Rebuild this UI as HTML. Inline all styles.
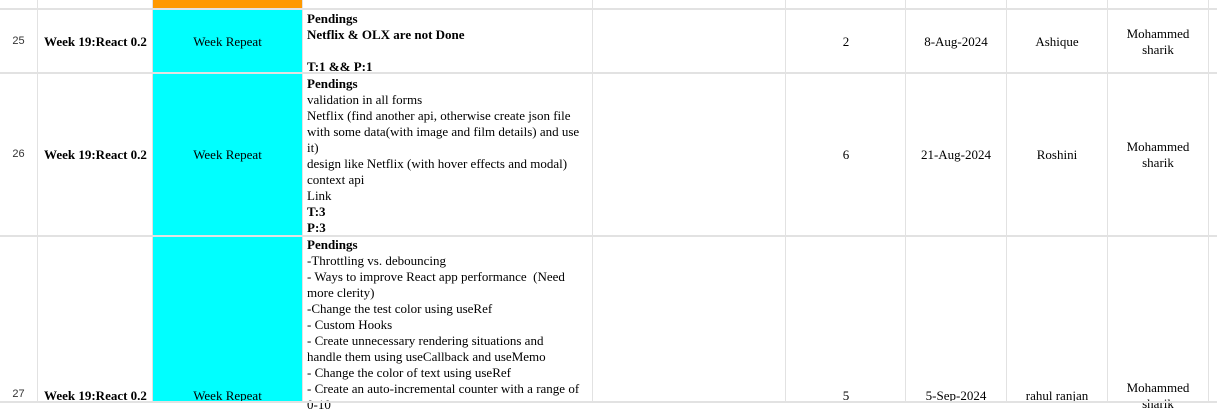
<!DOCTYPE html>
<html><head><style>
body{margin:0;width:1217px;height:403px;overflow:hidden;background:#fff;font-family:"Liberation Serif",serif;font-size:13px;color:#000;position:relative}
.h{position:absolute;left:0;width:1217px;height:2px;background:#e2e2e2}
.v{position:absolute;top:0;height:403px;width:1px;background:#e2e2e2}
.c{position:absolute;text-align:center;line-height:16px;font-family:"Liberation Serif",serif}
.n{position:absolute;font-family:"Liberation Sans",sans-serif;font-size:11px;color:#333;width:37px;text-align:center}
.t{position:absolute;left:307px;width:276px;line-height:16px}
b{font-weight:bold}
</style></head><body>
<div style="position:absolute;left:153px;top:0;width:149px;height:9px;background:#ff9900"></div>
<div style="position:absolute;left:153px;top:10px;width:149px;height:393px;background:#00ffff"></div>
<div class="v" style="left:37px"></div>
<div class="v" style="left:152px"></div>
<div class="v" style="left:302px"></div>
<div class="v" style="left:592px"></div>
<div class="v" style="left:785px"></div>
<div class="v" style="left:905px"></div>
<div class="v" style="left:1006px"></div>
<div class="v" style="left:1107px"></div>
<div class="v" style="left:1208px"></div>
<div class="h" style="top:8px"></div>
<div class="h" style="top:72px"></div>
<div class="h" style="top:235px"></div>
<div style="position:absolute;left:307px;top:-8px;line-height:16px">"</div>

<div class="n" style="top:35px">25</div>
<div class="c" style="left:38px;width:115px;top:34px;font-weight:bold">Week 19:React 0.2</div>
<div class="c" style="left:153px;width:149px;top:34px">Week Repeat</div>
<div class="t" style="top:11px"><b>Pendings</b><br><b>Netflix &amp; OLX are not Done</b><br><br><b>T:1 &amp;&amp; P:1</b></div>
<div class="c" style="left:786px;width:120px;top:34px">2</div>
<div class="c" style="left:906px;width:100px;top:34px">8-Aug-2024</div>
<div class="c" style="left:1007px;width:100px;top:34px">Ashique</div>
<div class="c" style="left:1108px;width:100px;top:26px">Mohammed<br>sharik</div>

<div class="n" style="top:148px">26</div>
<div class="c" style="left:38px;width:115px;top:147px;font-weight:bold">Week 19:React 0.2</div>
<div class="c" style="left:153px;width:149px;top:147px">Week Repeat</div>
<div class="t" style="top:76px"><b>Pendings</b><br>validation in all forms<br>Netflix (find another api, otherwise create json file with some data(with image and film details) and use it)<br>design like Netflix (with hover effects and modal)<br>context api<br>Link<br><b>T:3</b><br><b>P:3</b></div>
<div class="c" style="left:786px;width:120px;top:147px">6</div>
<div class="c" style="left:906px;width:100px;top:147px">21-Aug-2024</div>
<div class="c" style="left:1007px;width:100px;top:147px">Roshini</div>
<div class="c" style="left:1108px;width:100px;top:139px">Mohammed<br>sharik</div>

<div class="n" style="top:388px">27</div>
<div class="c" style="left:38px;width:115px;top:388px;font-weight:bold">Week 19:React 0.2</div>
<div class="c" style="left:153px;width:149px;top:388px">Week Repeat</div>
<div class="t" style="top:237px"><b>Pendings</b><br>-Throttling vs. debouncing<br>- Ways to improve React app performance&nbsp; (Need more clerity)<br>-Change the test color using useRef<br>- Custom Hooks<br>- Create unnecessary rendering situations and<br>handle them using useCallback and useMemo<br>- Change the color of text using useRef<br>- Create an auto-incremental counter with a range of 0-10</div>
<div class="c" style="left:786px;width:120px;top:388px">5</div>
<div class="c" style="left:906px;width:100px;top:388px">5-Sep-2024</div>
<div class="c" style="left:1007px;width:100px;top:388px">rahul ranjan</div>
<div class="c" style="left:1108px;width:100px;top:380px">Mohammed<br>sharik</div>
<div style="position:absolute;left:0;top:401px;width:1217px;height:2px;background:#e2e2e2"></div>
</body></html>
